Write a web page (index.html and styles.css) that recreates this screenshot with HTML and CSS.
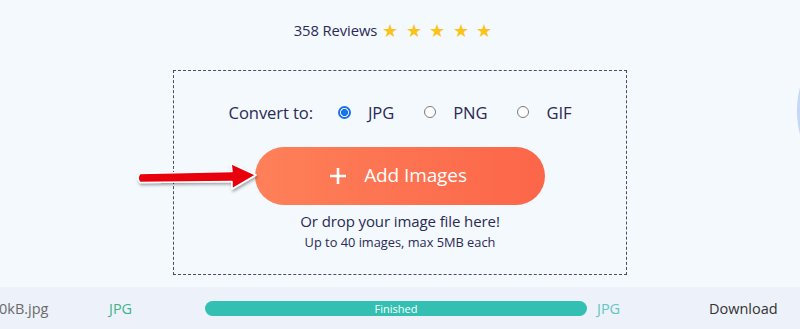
FILE: index.html
```html
<!DOCTYPE html>
<html>
<head>
<meta charset="utf-8">
<link rel="stylesheet" href="styles.css">
</head>
<body>
<div class="page">
  <div class="reviews">
    <span class="count">358 Reviews</span>
    <span class="stars"><span>★</span><span>★</span><span>★</span><span>★</span><span>★</span></span>
  </div>
  <div class="dropzone">
    <div class="convert">
      <span class="label">Convert to:</span>
      <label class="opt"><span class="radio checked"></span>JPG</label>
      <label class="opt"><span class="radio"></span>PNG</label>
      <label class="opt"><span class="radio"></span>GIF</label>
    </div>
    <button class="add">
      <svg class="plus" width="18" height="18" viewBox="0 0 18 18"><path d="M9 1v16M1 9h16" stroke="#fff" stroke-width="2.6" stroke-linecap="butt"/></svg>
      <span>Add Images</span>
    </button>
    <div class="drop">Or drop your image file here!</div>
    <div class="limit">Up to 40 images, max 5MB each</div>
    <svg class="arrow" width="130" height="36" viewBox="0 0 130 36">
      <defs>
        <filter id="sh" x="-10%" y="-30%" width="130%" height="180%">
          <feDropShadow dx="1" dy="2" stdDeviation="1.5" flood-color="#000" flood-opacity="0.35"/>
        </filter>
      </defs>
      <path d="M5 15.5 L97 13.5 L96 5.5 L121 17 L97 31 L97 23.5 L5 24.5 Q1 20 5 15.5 Z" fill="#e8000b" stroke="#fff" stroke-width="1.6" stroke-linejoin="round" filter="url(#sh)"/>
    </svg>
  </div>
  <div class="filebar">
    <span class="fname">0kB.jpg</span>
    <span class="fmt">JPG</span>
    <div class="progress"><span>Finished</span></div>
    <span class="fmt2">JPG</span>
    <span class="dl">Download</span>
  </div>
  <div class="arc"></div>
</div>
</body>
</html>
```
FILE: styles.css
```css
html, body {
  margin: 0;
  padding: 0;
}
body {
  background: #f3f9fd;
  font-family: "Open Sans", "Noto Sans", sans-serif;
  color: #2b2a55;
  width: 800px;
  height: 329px;
  overflow: hidden;
}
.page {
  position: relative;
  width: 800px;
  height: 329px;
  overflow: hidden;
  display: flex;
  flex-direction: column;
  align-items: center;
}
.reviews {
  margin-top: 19px;
  height: 22px;
  display: flex;
  align-items: center;
  font-size: 14.8px;
  letter-spacing: -0.1px;
  margin-right: 14px;
}
.stars {
  color: #fbc31a;
  font-size: 18px;
  margin-left: 5px;
  display: flex;
  gap: 7.5px;
}
.stars span {
  width: 16px;
  text-align: center;
}
.dropzone {
  position: relative;
  margin-top: 29px;
  width: 452px;
  height: 203px;
  border: 1px dashed #4b4b68;
  display: flex;
  flex-direction: column;
  align-items: center;
}
.convert {
  margin-top: 30px;
  height: 22px;
  display: flex;
  align-items: center;
  font-size: 16.6px;
  letter-spacing: -0.1px;
}
.label {
  margin-right: 25px;
}
.opt {
  display: flex;
  align-items: center;
  margin-right: 30px;
}
.opt:last-child {
  margin-right: 0;
}
.radio {
  width: 10px;
  height: 10px;
  border: 1px solid #7a7a7a;
  border-radius: 50%;
  background: #fff;
  margin-right: 17px;
  box-sizing: content-box;
}
.radio.checked {
  border: 2px solid #1b73e8;
  width: 9px;
  height: 9px;
  background: radial-gradient(circle, #1b73e8 0 3.3px, #fff 3.8px);
}
.add {
  margin-top: 24px;
  width: 290px;
  height: 58px;
  border: none;
  border-radius: 29px;
  background: linear-gradient(90deg, #fe8059, #fc6649);
  color: #fff;
  font-family: inherit;
  font-size: 19px;
  display: flex;
  align-items: center;
  justify-content: center;
  gap: 17px;
  padding: 0 4px 2px 0;
  letter-spacing: -0.1px;
}
.plus {
  margin-top: 2px;
}
.drop {
  margin-top: 5px;
  font-size: 15px;
  line-height: 22px;
  letter-spacing: -0.1px;
}
.limit {
  font-size: 12.8px;
  line-height: 18px;
  margin-top: 1px;
}
.arrow {
  position: absolute;
  left: -39px;
  top: 87px;
}
.filebar {
  position: absolute;
  left: 0;
  right: 0;
  top: 287px;
  height: 42px;
  background: #edf1f9;
  display: flex;
  align-items: center;
  font-size: 14.5px;
}
.fname {
  color: #6b6b6b;
  margin-left: -1px;
  width: 110px;
}
.fmt {
  color: #3db38a;
  width: 96px;
}
.progress {
  width: 382px;
  height: 15px;
  border-radius: 8px;
  background: #33bfb1;
  color: #fff;
  font-size: 11px;
  display: flex;
  align-items: center;
  justify-content: center;
  line-height: 15px;
}
.fmt2 {
  color: #62c6c1;
  margin-left: 10px;
  width: 112px;
}
.dl {
  color: #333;
}
.arc {
  position: absolute;
  right: -117px;
  top: 36px;
  width: 120px;
  height: 150px;
  border-radius: 50%;
  background: #c3d7f6;
}
```
